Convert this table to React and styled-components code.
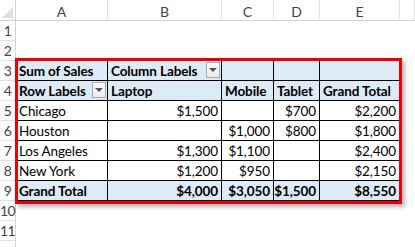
import React from 'react';
import styled, { createGlobalStyle } from 'styled-components';

const GlobalStyle = createGlobalStyle`
  html, body {
    margin: 0;
    padding: 0;
    background: #fff;
  }
  body {
    font-family: Lato, 'Liberation Sans', sans-serif;
  }
`;

const COLS = ['A', 'B', 'C', 'D', 'E', ''];

const Sheet = styled.div`
  display: grid;
  grid-template-columns: 16px 92px 114px 52px 46px 80px 1fr;
  grid-template-rows: 21px repeat(12, 20px);
  width: 415px;
  height: 247px;
  overflow: hidden;
  background: #fff;
`;

const Corner = styled.div`
  position: relative;
  background: #fff;
  border-right: 1px solid #d4d4d4;
  border-bottom: 1px solid #d4d4d4;
  box-sizing: border-box;

  &::after {
    content: '';
    position: absolute;
    right: 2px;
    bottom: 2px;
    border-left: 11px solid transparent;
    border-bottom: 11px solid #dfdfdf;
  }
`;

const ColHead = styled.div`
  display: flex;
  align-items: center;
  justify-content: center;
  box-sizing: border-box;
  border-right: 1px solid #e1e1e1;
  border-bottom: 1px solid #d4d4d4;
  font-size: 14px;
  color: #444;
  padding-top: 2px;
`;

const RowHead = styled.div`
  display: flex;
  align-items: center;
  justify-content: center;
  box-sizing: border-box;
  border-right: 1px solid #d4d4d4;
  border-bottom: 1px solid #e1e1e1;
  font-size: 14px;
  color: #444;
  grid-column: 1;
  letter-spacing: -0.5px;
`;

const Pivot = styled.div`
  position: relative;
  grid-column: 2 / 7;
  grid-row: 4 / 11;
  display: grid;
  grid-template-columns: 92px 114px 52px 46px 80px;
  grid-template-rows: repeat(7, 20px);
`;

const RedFrame = styled.div`
  position: absolute;
  left: -1px;
  top: -3px;
  right: -2px;
  bottom: -3px;
  border: 3px solid #e8000b;
  box-shadow: 3px 3px 4px rgba(0, 0, 0, 0.28);
  pointer-events: none;
`;

const Cell = styled.div`
  position: relative;
  box-sizing: border-box;
  display: flex;
  align-items: center;
  justify-content: ${(p) => (p.$right ? 'flex-end' : 'flex-start')};
  padding: 1px 3px 0 3px;
  border-right: 1px solid #000;
  border-bottom: 1px solid #000;
  background: ${(p) => (p.$shade ? '#ddebf7' : '#fff')};
  font-weight: ${(p) => (p.$bold ? 700 : 400)};
  font-size: 13.5px;
  letter-spacing: -0.1px;
  color: #000;
  white-space: nowrap;
`;

const DropButton = styled.div`
  position: absolute;
  right: 1px;
  top: 1px;
  width: 14px;
  height: 16px;
  box-sizing: border-box;
  border: 1px solid #a9a9a9;
  background: linear-gradient(#fbfbfb, #ececec);
  display: flex;
  align-items: center;
  justify-content: center;

  &::after {
    content: '';
    border-left: 4px solid transparent;
    border-right: 4px solid transparent;
    border-top: 4px solid #555;
  }
`;

const cities = [
  ['Chicago', '$1,500', '', '$700', '$2,200'],
  ['Houston', '', '$1,000', '$800', '$1,800'],
  ['Los Angeles', '$1,300', '$1,100', '', '$2,400'],
  ['New York', '$1,200', '$950', '', '$2,150'],
];

function PivotTable() {
  return (
    <Pivot>
      <Cell $shade $bold>Sum of Sales</Cell>
      <Cell $shade $bold>
        Column Labels
        <DropButton />
      </Cell>
      <Cell $shade />
      <Cell $shade />
      <Cell $shade />

      <Cell $shade $bold>
        Row Labels
        <DropButton />
      </Cell>
      <Cell $shade $bold>Laptop</Cell>
      <Cell $shade $bold>Mobile</Cell>
      <Cell $shade $bold>Tablet</Cell>
      <Cell $shade $bold>Grand Total</Cell>

      {cities.map((row) =>
        row.map((v, i) => (
          <Cell key={row[0] + i} $right={i > 0}>
            {v}
          </Cell>
        ))
      )}

      <Cell $shade $bold>Grand Total</Cell>
      <Cell $shade $bold $right>$4,000</Cell>
      <Cell $shade $bold $right>$3,050</Cell>
      <Cell $shade $bold $right>$1,500</Cell>
      <Cell $shade $bold $right>$8,550</Cell>

      <RedFrame />
    </Pivot>
  );
}

export default function App() {
  const rows = Array.from({ length: 12 }, (_, i) => i + 1);
  return (
    <>
      <GlobalStyle />
      <Sheet>
        <Corner />
        {COLS.map((c, i) => (
          <ColHead key={i}>{c}</ColHead>
        ))}
        {rows.map((r) => (
          <RowHead key={r} style={{ gridRow: r + 1 }}>
            {r < 12 ? r : ''}
          </RowHead>
        ))}
        <PivotTable />
      </Sheet>
    </>
  );
}
